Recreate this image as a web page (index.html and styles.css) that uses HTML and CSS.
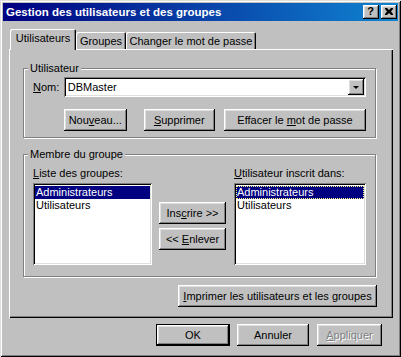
FILE: index.html
```html
<!DOCTYPE html>
<html lang="fr">
<head>
    <meta charset="UTF-8">
    <title>Gestion des utilisateurs et des groupes</title>
    <link rel="stylesheet" href="styles.css">
</head>
<body>
    <div class="window">
        <div class="titlebar">
            <span class="title">Gestion des utilisateurs et des groupes</span>
            <div class="caption-buttons">
                <button class="caption-btn help">?</button>
                <button class="caption-btn close">
                    <svg width="8" height="7" viewBox="0 0 8 7">
                        <path d="M0 0h2l2 2 2-2h2v1L6 3.5 8 6v1H6L4 5 2 7H0V6l2-2.5L0 1z" fill="#000"/>
                    </svg>
                </button>
            </div>
        </div>

        <div class="dialog">
            <div class="tabs">
                <div class="tab active">Utilisateurs</div>
                <div class="tab tab-groups">Groupes</div>
                <div class="tab tab-password">Changer le mot de passe</div>
            </div>

            <div class="panel">
                <fieldset class="group group-user">
                    <legend>Utilisateur</legend>
                    <div class="group-body">
                        <div class="name-row">
                            <label class="name-label"><u>N</u>om:</label>
                            <div class="combo">
                                <span class="combo-text">DBMaster</span>
                                <span class="combo-btn"><span class="arrow"></span></span>
                            </div>
                        </div>
                        <div class="user-actions">
                            <button class="btn btn-new">Nou<u>v</u>eau...</button>
                            <button class="btn btn-delete"><u>S</u>upprimer</button>
                            <button class="btn btn-clear">Effacer le <u>m</u>ot de passe</button>
                        </div>
                    </div>
                </fieldset>

                <fieldset class="group group-members">
                    <legend>Membre du groupe</legend>
                    <div class="group-body members">
                        <div class="col">
                            <div class="list-label"><u>L</u>iste des groupes:</div>
                            <div class="list list-left">
                                <div class="item selected">Administrateurs</div>
                                <div class="item">Utilisateurs</div>
                            </div>
                        </div>
                        <div class="col move-buttons">
                            <button class="btn btn-move">Ins<u>c</u>rire &gt;&gt;</button>
                            <button class="btn btn-move">&lt;&lt; <u>E</u>nlever</button>
                        </div>
                        <div class="col">
                            <div class="list-label"><u>U</u>tilisateur inscrit dans:</div>
                            <div class="list list-right">
                                <div class="item selected focused">Administrateurs</div>
                                <div class="item">Utilisateurs</div>
                            </div>
                        </div>
                    </div>
                </fieldset>

                <div class="print-row">
                    <button class="btn btn-print"><u>I</u>mprimer les utilisateurs et les groupes</button>
                </div>
            </div>

            <div class="dialog-buttons">
                <button class="btn default btn-ok">OK</button>
                <button class="btn btn-cancel">Annuler</button>
                <button class="btn disabled btn-apply"><u>A</u>ppliquer</button>
            </div>
        </div>
    </div>
</body>
</html>
```

FILE: styles.css
```css
* {
    box-sizing: border-box;
}
body {
    margin: 0;
    background-color: #c0c0c0;
    font-family: "Liberation Sans", Arial, sans-serif;
    font-size: 11px;
    color: #000;
}
u {
    text-decoration: underline;
    text-underline-offset: 1px;
}
.window {
    width: 401px;
    height: 357px;
    padding: 3px;
    background-color: #c0c0c0;
    box-shadow: inset 1px 1px #dfdfdf, inset -1px -1px #000, inset 2px 2px #fff, inset -2px -2px #808080;
}
.titlebar {
    height: 18px;
    display: flex;
    align-items: center;
    justify-content: space-between;
    padding: 0 1px 0 3px;
    background: linear-gradient(to right, #000080, #1084d0);
    color: white;
}
.title {
    font-weight: bold;
    font-size: 11.5px;
    line-height: 13px;
}
.caption-buttons {
    display: flex;
    gap: 2px;
}
.caption-btn {
    width: 16px;
    height: 14px;
    padding: 0;
    border: none;
    background-color: #c0c0c0;
    box-shadow: inset -1px -1px #000, inset 1px 1px #fff, inset -2px -2px #808080, inset 2px 2px #dfdfdf;
    display: flex;
    align-items: center;
    justify-content: center;
    font-family: "Liberation Sans", Arial, sans-serif;
    font-weight: bold;
    font-size: 11px;
    line-height: 11px;
    color: #000;
}
.caption-btn.help {
    padding: 0 1px 1px 0;
}
.caption-btn.close svg {
    display: block;
    margin: 0 1px 1px 0;
}
.dialog {
    padding: 8px 5px 0 6px;
}
.tabs {
    display: flex;
    align-items: flex-end;
    height: 20px;
    padding-left: 1px;
}
.tab {
    height: 17px;
    padding-top: 3px;
    line-height: 13px;
    text-align: center;
    background-color: #c0c0c0;
    border-radius: 2px 2px 0 0;
    box-shadow: inset 1px 1px #fff, inset -1px 0 #000, inset -2px 0 #808080;
}
.tab.active {
    position: relative;
    z-index: 1;
    width: 66px;
    height: 21px;
    margin-bottom: -1px;
}
.tab-groups {
    width: 50px;
}
.tab-password {
    width: 130px;
}
.panel {
    height: 269px;
    padding: 13px 0 0 14px;
    box-shadow: inset 1px 1px #fff, inset -1px -1px #000, inset -2px -2px #808080;
}
.group {
    width: 353px;
    margin: 0;
    padding: 0;
    min-width: 0;
    border: 1px solid #808080;
    box-shadow: inset 1px 1px #fff, 1px 1px #fff;
}
.group legend {
    margin-left: 4px;
    padding: 0 2px;
    line-height: 13px;
    background-color: #c0c0c0;
}
.group-user .group-body {
    padding: 2px 9px 6px;
}
.name-row {
    display: flex;
    align-items: center;
}
.name-label {
    width: 31px;
}
.combo {
    width: 304px;
    height: 20px;
    padding: 2px;
    display: flex;
    align-items: center;
    background-color: white;
    box-shadow: inset 1px 1px #808080, inset -1px -1px #fff, inset 2px 2px #000, inset -2px -2px #dfdfdf;
}
.combo-text {
    flex: 1;
    padding-left: 2px;
}
.combo-btn {
    width: 16px;
    height: 16px;
    display: flex;
    align-items: center;
    justify-content: center;
    background-color: #c0c0c0;
    box-shadow: inset -1px -1px #000, inset 1px 1px #fff, inset -2px -2px #808080, inset 2px 2px #dfdfdf;
}
.arrow {
    width: 0;
    height: 0;
    border-left: 3px solid transparent;
    border-right: 3px solid transparent;
    border-top: 3px solid #000;
    margin: 1px 1px 0 0;
}
.btn {
    height: 22px;
    padding: 0;
    border: none;
    background-color: #c0c0c0;
    font-family: inherit;
    font-size: 11px;
    color: #000;
    box-shadow: inset -1px -1px #000, inset 1px 1px #fff, inset -2px -2px #808080, inset 2px 2px #dfdfdf;
}
.btn.default {
    border: 1px solid #000;
}
.btn.disabled {
    color: #808080;
    text-shadow: 1px 1px #fff;
}
.user-actions {
    display: flex;
    margin: 12px 0 0 31px;
}
.btn-new {
    width: 63px;
}
.btn-delete {
    width: 72px;
    margin-left: 17px;
}
.btn-clear {
    width: 143px;
    margin-left: 9px;
}
.group-members {
    margin-top: 10px;
}
.members {
    display: grid;
    grid-template-columns: 119px 67px 133px;
    column-gap: 7px;
    padding: 6px 9px 11px;
}
.members .col:last-child {
    margin-left: 1px;
}
.list-label {
    line-height: 13px;
    margin-bottom: 3px;
}
.list {
    height: 82px;
    padding: 3px 2px 2px;
    background-color: white;
    box-shadow: inset 1px 1px #808080, inset -1px -1px #fff, inset 2px 2px #000, inset -2px -2px #dfdfdf;
}
.item {
    line-height: 13px;
    padding-left: 1px;
    white-space: nowrap;
}
.item.selected {
    background-color: #000080;
    color: white;
}
.item.focused {
    outline: 1px dotted #ffff80;
    outline-offset: -1px;
}
.move-buttons {
    display: flex;
    flex-direction: column;
    gap: 4px;
    padding-top: 35px;
}
.print-row {
    display: flex;
    justify-content: flex-end;
    width: 354px;
    margin-top: 8px;
}
.btn-print {
    width: 199px;
}
.dialog-buttons {
    display: flex;
    justify-content: flex-end;
    margin-top: 6px;
    padding-right: 11px;
}
.btn-ok {
    width: 74px;
}
.btn-cancel {
    width: 72px;
    margin-left: 7px;
}
.btn-apply {
    width: 65px;
    margin-left: 8px;
}
```
